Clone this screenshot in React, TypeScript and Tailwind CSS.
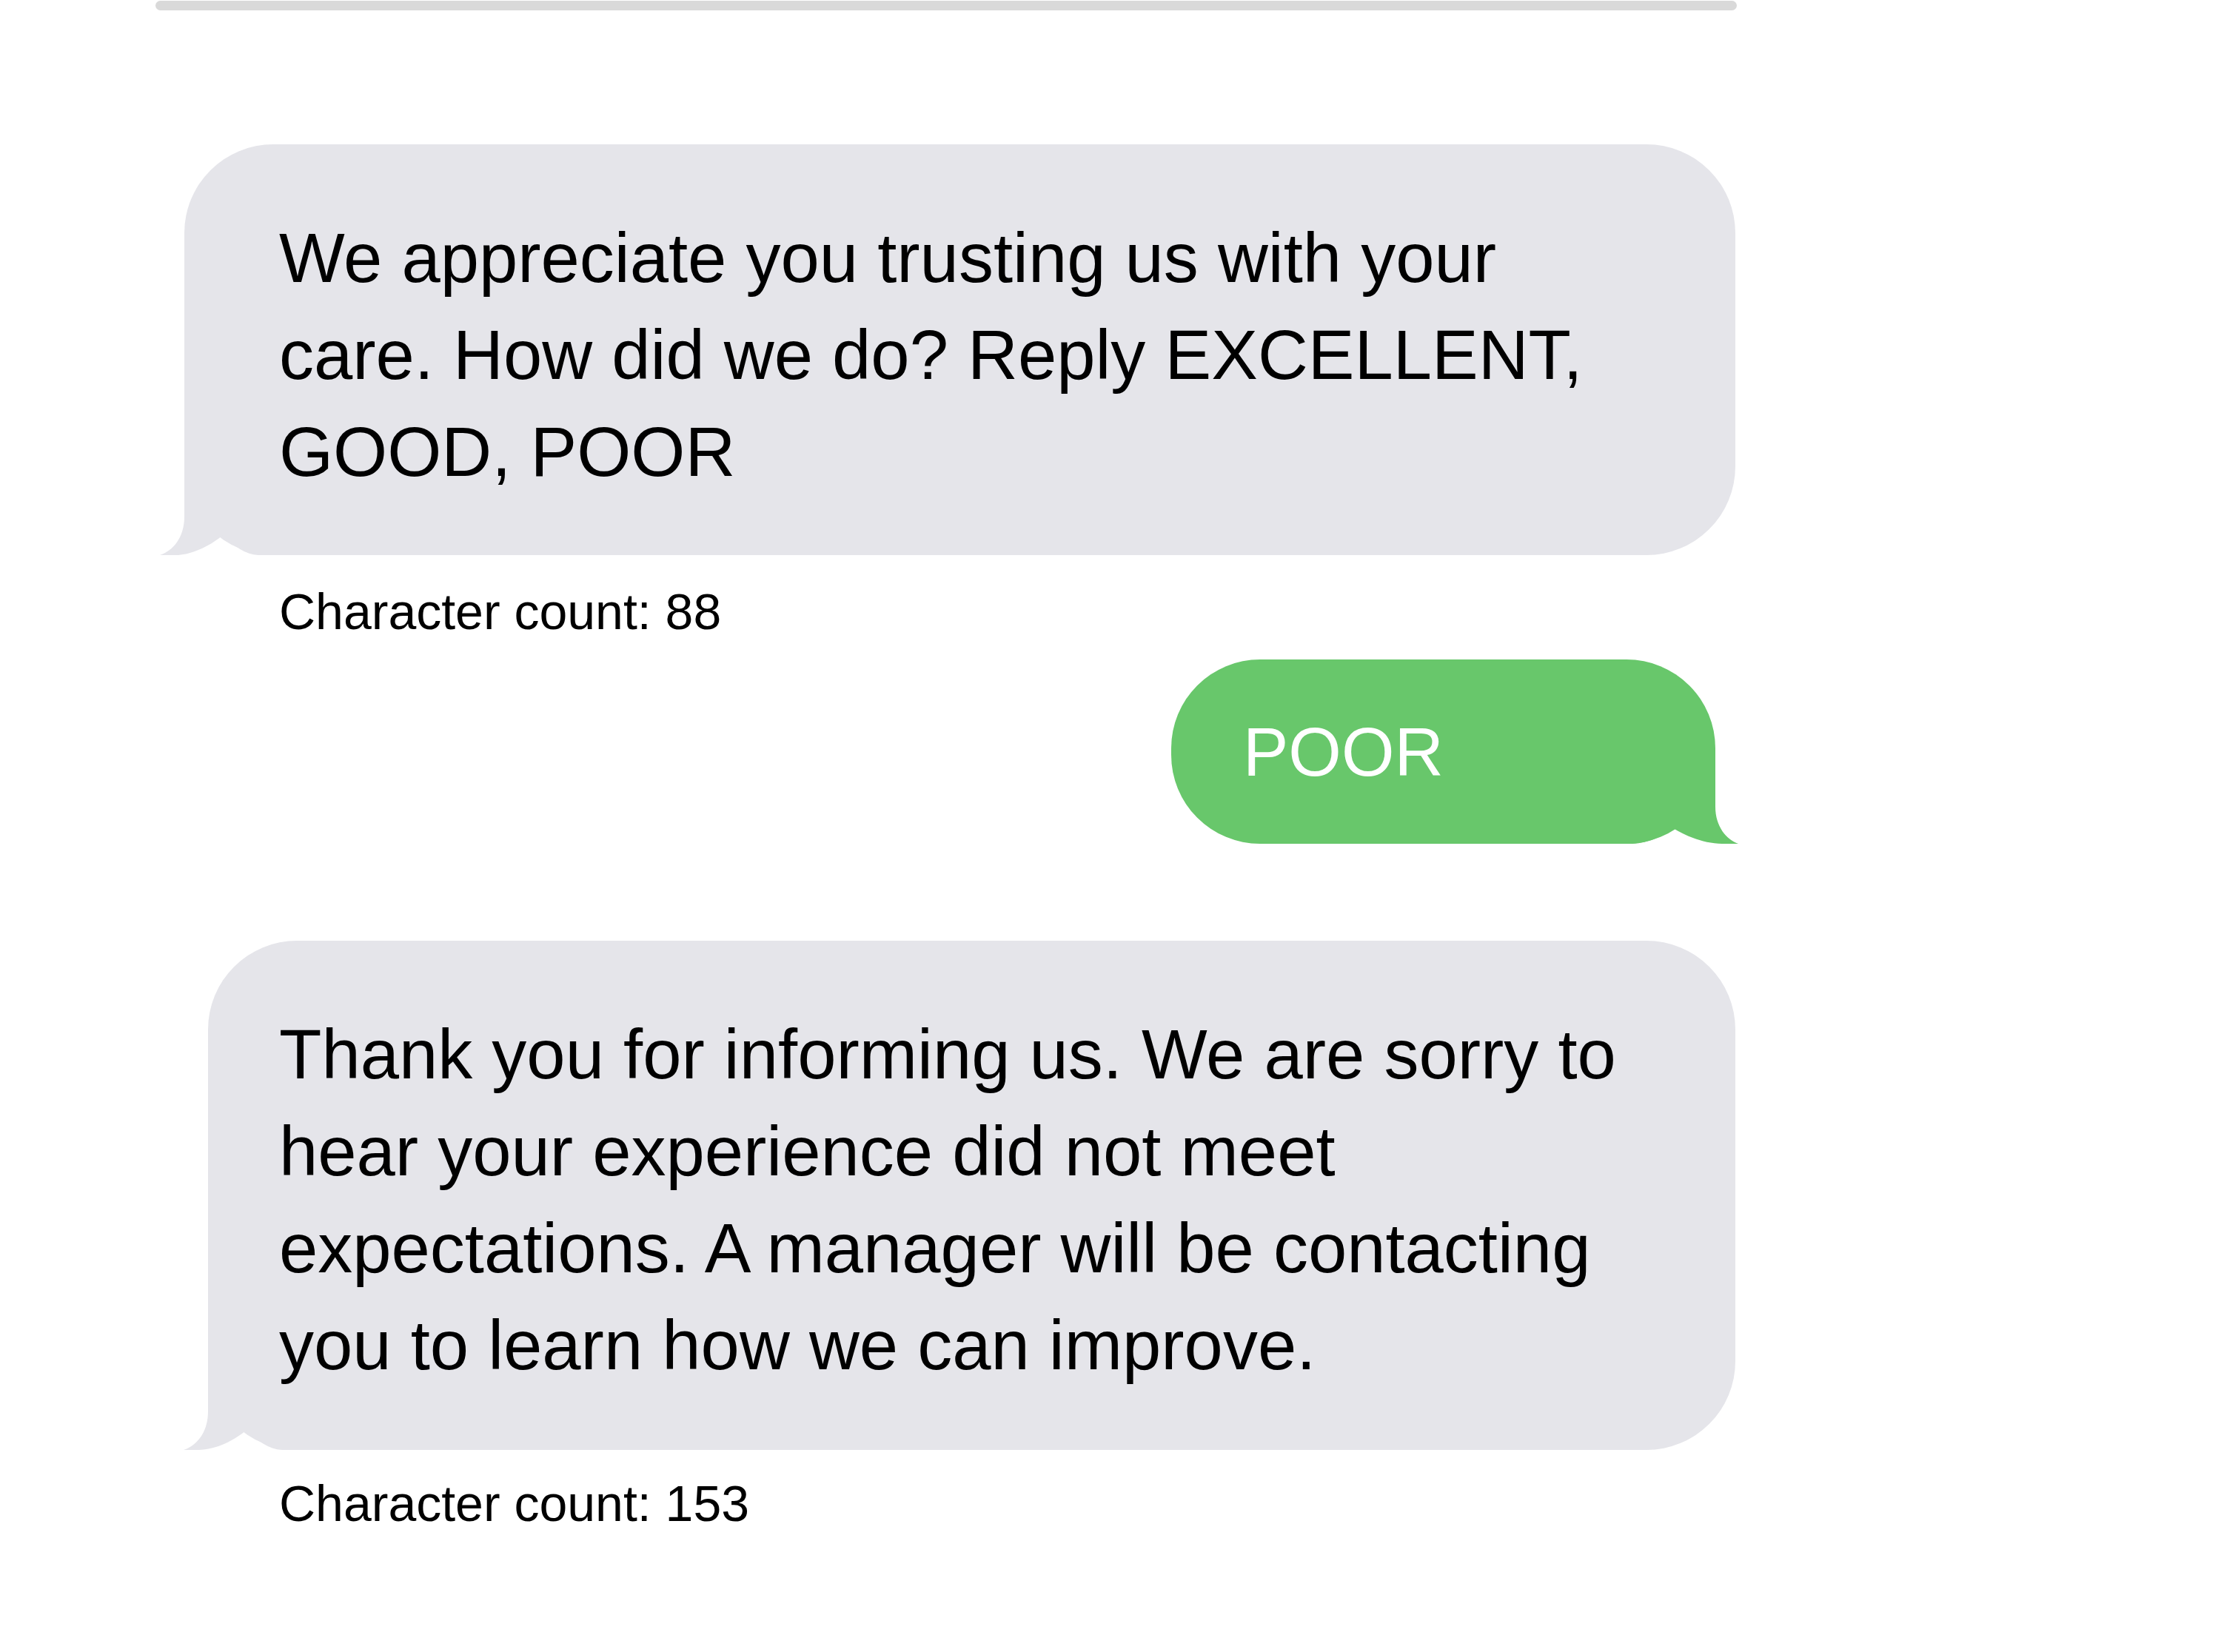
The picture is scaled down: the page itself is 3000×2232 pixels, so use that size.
import React from 'react';

const GRAY = '#e5e5ea';
const GREEN = '#68c76b';

// tail for the incoming (gray) bubble, drawn at the bottom-left corner
const LeftTail: React.FC<{ color: string }> = ({ color }) => (
    <svg
        className="absolute bottom-0 left-[-33px]"
        width="170"
        height="130"
        viewBox="0 0 170 130"
    >
        <path
            d="M33 0 L170 0 L170 130 L133 130 C115 129 100 118 85 103 C70 116 44 130 20 130 L0 130 C18 124 33 106 33 78 Z"
            fill={color}
        />
    </svg>
);

// mirrored tail for the outgoing (green) bubble
const RightTail: React.FC<{ color: string }> = ({ color }) => (
    <svg
        className="absolute bottom-0 right-[-31px]"
        width="170"
        height="125"
        viewBox="0 0 170 125"
    >
        <g transform="translate(170,0) scale(-1,1)">
            <path
                d="M31 0 L170 0 L170 125 L143 125 C120 124 104 115 88 104 C72 114 46 125 22 125 L0 125 C16 119 31 102 31 75 Z"
                fill={color}
            />
        </g>
    </svg>
);

const App: React.FC = () => {
    return (
        <div className="min-h-screen w-[3000px] bg-white font-['Liberation_Sans',Arial,sans-serif] text-black">
            <div className="ml-[210px] flex w-[2136px] flex-col">
                <div className="mt-[1px] h-[13px] rounded-full bg-[#d9d9d9]" />

                {/* survey question */}
                <div className="relative mt-[181px] ml-[39px] w-[2095px] rounded-[120px] bg-[#e5e5ea] pt-[88px] pb-[74px] pl-[128px]">
                    <LeftTail color={GRAY} />
                    <p className="relative w-[1840px] text-[94px] leading-[131px]">
                        We appreciate you trusting us with your care. How did we do? Reply EXCELLENT, GOOD, POOR
                    </p>
                </div>
                <p className="mt-[38px] ml-[167px] text-[68px] leading-[77px]">Character count: 88</p>

                {/* reply */}
                <div className="relative mt-[26px] mr-[29px] h-[249px] w-[735px] self-end rounded-[120px] bg-[#68c76b] pt-[73px] pl-[97px]">
                    <RightTail color={GREEN} />
                    <p className="relative text-[92px] leading-[105px] text-white">POOR</p>
                </div>

                {/* follow-up */}
                <div className="relative mt-[131px] ml-[71px] w-[2063px] rounded-[120px] bg-[#e5e5ea] pt-[88px] pb-[76px] pl-[96px]">
                    <LeftTail color={GRAY} />
                    <p className="relative w-[1840px] text-[94px] leading-[131px]">
                        Thank you for informing us. We are sorry to hear your experience did not meet expectations. A manager will be contacting you to learn how we can improve.
                    </p>
                </div>
                <p className="mt-[34px] ml-[167px] text-[68px] leading-[77px]">Character count: 153</p>
            </div>
        </div>
    );
};

export default App;
